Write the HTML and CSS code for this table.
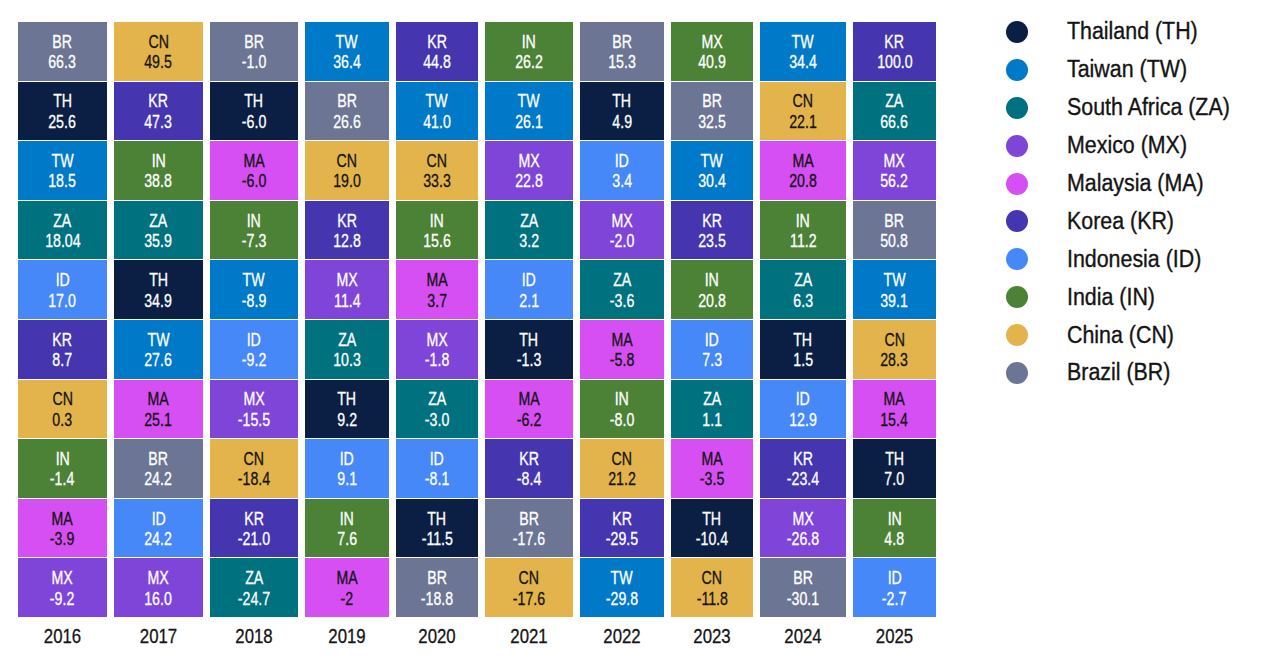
FILE: index.html
```html
<!DOCTYPE html>
<html>
<head>
<meta charset="utf-8">
<link rel="stylesheet" href="styles.css">
</head>
<body>
<div class="page">
  <div class="chart">
    <div class="col w89">
      <div class="cell br"><span>BR</span><span>66.3</span></div>
      <div class="cell th"><span>TH</span><span>25.6</span></div>
      <div class="cell tw"><span>TW</span><span>18.5</span></div>
      <div class="cell za"><span>ZA</span><span>18.04</span></div>
      <div class="cell id"><span>ID</span><span>17.0</span></div>
      <div class="cell kr"><span>KR</span><span>8.7</span></div>
      <div class="cell cn"><span>CN</span><span>0.3</span></div>
      <div class="cell in"><span>IN</span><span>-1.4</span></div>
      <div class="cell ma"><span>MA</span><span>-3.9</span></div>
      <div class="cell mx"><span>MX</span><span>-9.2</span></div>
      <div class="year">2016</div>
    </div>
    <div class="col w89">
      <div class="cell cn"><span>CN</span><span>49.5</span></div>
      <div class="cell kr"><span>KR</span><span>47.3</span></div>
      <div class="cell in"><span>IN</span><span>38.8</span></div>
      <div class="cell za"><span>ZA</span><span>35.9</span></div>
      <div class="cell th"><span>TH</span><span>34.9</span></div>
      <div class="cell tw"><span>TW</span><span>27.6</span></div>
      <div class="cell ma"><span>MA</span><span>25.1</span></div>
      <div class="cell br"><span>BR</span><span>24.2</span></div>
      <div class="cell id"><span>ID</span><span>24.2</span></div>
      <div class="cell mx"><span>MX</span><span>16.0</span></div>
      <div class="year">2017</div>
    </div>
    <div class="col w88">
      <div class="cell br"><span>BR</span><span>-1.0</span></div>
      <div class="cell th"><span>TH</span><span>-6.0</span></div>
      <div class="cell ma"><span>MA</span><span>-6.0</span></div>
      <div class="cell in"><span>IN</span><span>-7.3</span></div>
      <div class="cell tw"><span>TW</span><span>-8.9</span></div>
      <div class="cell id"><span>ID</span><span>-9.2</span></div>
      <div class="cell mx"><span>MX</span><span>-15.5</span></div>
      <div class="cell cn"><span>CN</span><span>-18.4</span></div>
      <div class="cell kr"><span>KR</span><span>-21.0</span></div>
      <div class="cell za"><span>ZA</span><span>-24.7</span></div>
      <div class="year">2018</div>
    </div>
    <div class="col w84">
      <div class="cell tw"><span>TW</span><span>36.4</span></div>
      <div class="cell br"><span>BR</span><span>26.6</span></div>
      <div class="cell cn"><span>CN</span><span>19.0</span></div>
      <div class="cell kr"><span>KR</span><span>12.8</span></div>
      <div class="cell mx"><span>MX</span><span>11.4</span></div>
      <div class="cell za"><span>ZA</span><span>10.3</span></div>
      <div class="cell th"><span>TH</span><span>9.2</span></div>
      <div class="cell id"><span>ID</span><span>9.1</span></div>
      <div class="cell in"><span>IN</span><span>7.6</span></div>
      <div class="cell ma"><span>MA</span><span>-2</span></div>
      <div class="year">2019</div>
    </div>
    <div class="col w82">
      <div class="cell kr"><span>KR</span><span>44.8</span></div>
      <div class="cell tw"><span>TW</span><span>41.0</span></div>
      <div class="cell cn"><span>CN</span><span>33.3</span></div>
      <div class="cell in"><span>IN</span><span>15.6</span></div>
      <div class="cell ma"><span>MA</span><span>3.7</span></div>
      <div class="cell mx"><span>MX</span><span>-1.8</span></div>
      <div class="cell za"><span>ZA</span><span>-3.0</span></div>
      <div class="cell id"><span>ID</span><span>-8.1</span></div>
      <div class="cell th"><span>TH</span><span>-11.5</span></div>
      <div class="cell br"><span>BR</span><span>-18.8</span></div>
      <div class="year">2020</div>
    </div>
    <div class="col w88">
      <div class="cell in"><span>IN</span><span>26.2</span></div>
      <div class="cell tw"><span>TW</span><span>26.1</span></div>
      <div class="cell mx"><span>MX</span><span>22.8</span></div>
      <div class="cell za"><span>ZA</span><span>3.2</span></div>
      <div class="cell id"><span>ID</span><span>2.1</span></div>
      <div class="cell th"><span>TH</span><span>-1.3</span></div>
      <div class="cell ma"><span>MA</span><span>-6.2</span></div>
      <div class="cell kr"><span>KR</span><span>-8.4</span></div>
      <div class="cell br"><span>BR</span><span>-17.6</span></div>
      <div class="cell cn"><span>CN</span><span>-17.6</span></div>
      <div class="year">2021</div>
    </div>
    <div class="col w84">
      <div class="cell br"><span>BR</span><span>15.3</span></div>
      <div class="cell th"><span>TH</span><span>4.9</span></div>
      <div class="cell id"><span>ID</span><span>3.4</span></div>
      <div class="cell mx"><span>MX</span><span>-2.0</span></div>
      <div class="cell za"><span>ZA</span><span>-3.6</span></div>
      <div class="cell ma"><span>MA</span><span>-5.8</span></div>
      <div class="cell in"><span>IN</span><span>-8.0</span></div>
      <div class="cell cn"><span>CN</span><span>21.2</span></div>
      <div class="cell kr"><span>KR</span><span>-29.5</span></div>
      <div class="cell tw"><span>TW</span><span>-29.8</span></div>
      <div class="year">2022</div>
    </div>
    <div class="col w82">
      <div class="cell in"><span>MX</span><span>40.9</span></div>
      <div class="cell br"><span>BR</span><span>32.5</span></div>
      <div class="cell tw"><span>TW</span><span>30.4</span></div>
      <div class="cell kr"><span>KR</span><span>23.5</span></div>
      <div class="cell in"><span>IN</span><span>20.8</span></div>
      <div class="cell id"><span>ID</span><span>7.3</span></div>
      <div class="cell za"><span>ZA</span><span>1.1</span></div>
      <div class="cell ma"><span>MA</span><span>-3.5</span></div>
      <div class="cell th"><span>TH</span><span>-10.4</span></div>
      <div class="cell cn"><span>CN</span><span>-11.8</span></div>
      <div class="year">2023</div>
    </div>
    <div class="col w86">
      <div class="cell tw"><span>TW</span><span>34.4</span></div>
      <div class="cell cn"><span>CN</span><span>22.1</span></div>
      <div class="cell ma"><span>MA</span><span>20.8</span></div>
      <div class="cell in"><span>IN</span><span>11.2</span></div>
      <div class="cell za"><span>ZA</span><span>6.3</span></div>
      <div class="cell th"><span>TH</span><span>1.5</span></div>
      <div class="cell id"><span>ID</span><span>12.9</span></div>
      <div class="cell kr"><span>KR</span><span>-23.4</span></div>
      <div class="cell mx"><span>MX</span><span>-26.8</span></div>
      <div class="cell br"><span>BR</span><span>-30.1</span></div>
      <div class="year">2024</div>
    </div>
    <div class="col w83">
      <div class="cell kr"><span>KR</span><span>100.0</span></div>
      <div class="cell za"><span>ZA</span><span>66.6</span></div>
      <div class="cell mx"><span>MX</span><span>56.2</span></div>
      <div class="cell br"><span>BR</span><span>50.8</span></div>
      <div class="cell tw"><span>TW</span><span>39.1</span></div>
      <div class="cell cn"><span>CN</span><span>28.3</span></div>
      <div class="cell ma"><span>MA</span><span>15.4</span></div>
      <div class="cell th"><span>TH</span><span>7.0</span></div>
      <div class="cell in"><span>IN</span><span>4.8</span></div>
      <div class="cell id"><span>ID</span><span>-2.7</span></div>
      <div class="year">2025</div>
    </div>
  </div>
  <ul class="legend">
    <li><i class="dot th"></i><span>Thailand (TH)</span></li>
    <li><i class="dot tw"></i><span>Taiwan (TW)</span></li>
    <li><i class="dot za"></i><span>South Africa (ZA)</span></li>
    <li><i class="dot mx"></i><span>Mexico (MX)</span></li>
    <li><i class="dot ma"></i><span>Malaysia (MA)</span></li>
    <li><i class="dot kr"></i><span>Korea (KR)</span></li>
    <li><i class="dot id"></i><span>Indonesia (ID)</span></li>
    <li><i class="dot in"></i><span>India (IN)</span></li>
    <li><i class="dot cn"></i><span>China (CN)</span></li>
    <li><i class="dot br"></i><span>Brazil (BR)</span></li>
  </ul>
</div>
</body>
</html>
```
FILE: styles.css
```css
html, body {
  margin: 0;
  padding: 0;
  background: #ffffff;
}

body {
  font-family: "Liberation Sans", Arial, sans-serif;
  color: #141414;
}

.page {
  display: flex;
  align-items: flex-start;
  padding: 22px 0 0 18px;
}

.chart {
  display: flex;
  gap: 7px;
}

.col {
  display: flex;
  flex-direction: column;
  gap: 1px;
}

.w89 { width: 89px; }
.w88 { width: 88px; }
.w86 { width: 86px; }
.w84 { width: 84px; }
.w83 { width: 83px; }
.w82 { width: 82px; }

.cell {
  height: 58.6px;
  display: flex;
  flex-direction: column;
  align-items: center;
  justify-content: center;
  padding-top: 2px;
  box-sizing: border-box;
  font-size: 17.5px;
  line-height: 20.5px;
  color: #ffffff;
  -webkit-text-stroke: 0.3px currentColor;
}

.cell span {
  display: block;
  transform: scaleX(0.81);
}

.year {
  margin-top: 6px;
  text-align: center;
  font-size: 19.5px;
  line-height: 24px;
  color: #141414;
  transform: scaleX(0.86);
  -webkit-text-stroke: 0.3px currentColor;
}

.br { background: #6c7594; }
.th { background: #0b1f45; }
.tw { background: #0079c8; }
.za { background: #00717f; }
.id { background: #4688f7; }
.kr { background: #4536b0; }
.cn { background: #e4b44c; color: #141414; }
.in { background: #4b8236; }
.ma { background: #d64ff2; color: #141414; }
.mx { background: #7f45d8; }

.legend {
  list-style: none;
  margin: -9px 0 0 70px;
  padding: 0;
}

.legend li {
  display: flex;
  align-items: center;
  height: 37.9px;
  font-size: 23.5px;
  color: #141414;
  -webkit-text-stroke: 0.35px currentColor;
}

.legend li span {
  display: block;
  white-space: nowrap;
  transform: scaleX(0.91);
  transform-origin: left center;
}

.dot {
  display: block;
  width: 22px;
  height: 22px;
  border-radius: 50%;
  margin-right: 39px;
  flex: none;
}
```
